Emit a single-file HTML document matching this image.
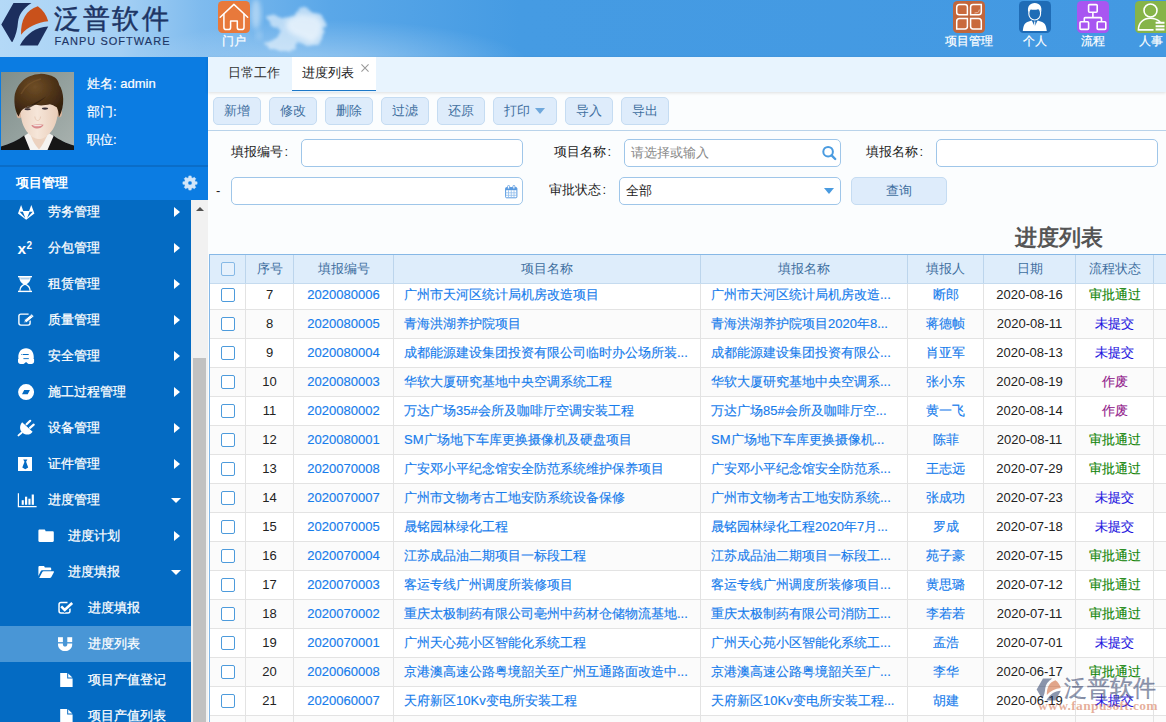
<!DOCTYPE html>
<html lang="zh"><head><meta charset="utf-8"><title>进度列表</title>
<style>
*{box-sizing:border-box;margin:0;padding:0}
html,body{width:1166px;height:722px;overflow:hidden;background:#fbfdfe;font-family:"Liberation Sans",sans-serif;font-size:13px;color:#222}
.abs{position:absolute}
#hdr{position:absolute;left:0;top:0;width:1166px;height:57px;overflow:hidden;
 background:linear-gradient(90deg,#b4d9f7 0px,#a5d0f4 120px,#7fbbee 200px,#5aa7e8 330px,#459be3 520px,#4399e2 1166px)}
#hdr .cloud{position:absolute;border-radius:50%;filter:blur(3px)}
.logotxt{position:absolute;left:54px;top:0.5px;font-size:26.5px;font-weight:500;color:#1d3565;letter-spacing:2.2px;line-height:36px;white-space:nowrap;-webkit-text-stroke:0.45px #1d3565}
.logosub{position:absolute;left:54.5px;top:34.5px;font-size:11px;color:#1d3565;letter-spacing:1.03px;line-height:12px;white-space:nowrap;-webkit-text-stroke:0.15px #1d3565}
.nav{position:absolute;top:1px;width:32px;height:32px;overflow:hidden}
.navl{position:absolute;top:34px;width:80px;text-align:center;color:#fff;font-size:12px;line-height:15px;white-space:nowrap;-webkit-text-stroke:0.2px #fff}
#side{position:absolute;left:0;top:57px;width:208px;height:665px;background:#0b7ce2;overflow:hidden}
#side .u{position:absolute;left:87px;color:#fff;font-size:13px;line-height:16px;white-space:nowrap;-webkit-text-stroke:0.2px #fff}
#sh{position:absolute;left:0;top:108px;width:208px;height:35px;background:#0b7ce2;border-top:2px solid #0a6dc8}
#sh b{position:absolute;left:16px;top:8px;color:#fff;font-size:13px;line-height:16px}
#menu{position:absolute;left:0;top:143px;width:191px;height:522px;background:#046bc3}
.mi{position:absolute;left:0;width:191px;height:36px;color:#fff;font-size:13px;line-height:36px;white-space:nowrap;-webkit-text-stroke:0.25px #fff}
.mi.on{background:#4996d6}
.mi .t{position:absolute;top:0}
.mi svg{position:absolute}
.ar{position:absolute;left:174px;top:13.1px;width:0;height:0;border-left:6.6px solid #fff;border-top:5.3px solid transparent;border-bottom:5.3px solid transparent}
.ad{position:absolute;left:171.3px;top:16.2px;width:0;height:0;border-top:5.8px solid #fff;border-left:5.2px solid transparent;border-right:5.2px solid transparent}
#sb{position:absolute;left:191px;top:143px;width:17px;height:522px;background:#f1f1f1}
#sb .th{position:absolute;left:2px;top:158px;width:13px;height:365px;background:#c1c1c1}
#sb .up{position:absolute;left:4.6px;top:6.8px;width:0;height:0;border-bottom:4.4px solid #505050;border-left:4px solid transparent;border-right:4px solid transparent}
#tabs{position:absolute;left:208px;top:57px;width:958px;height:35px;background:#e8f4fe;box-shadow:0 1px 3px rgba(0,0,0,.12)}
#tabs .t1{position:absolute;left:20px;top:8px;font-size:13px;line-height:16px;color:#333}
#tabs .t2{position:absolute;left:84px;top:0;width:84px;height:34px;background:#fff;border-bottom:1.5px solid #1d78c8}
#tabs .t2 span{position:absolute;left:10px;top:8px;font-size:13px;line-height:16px;color:#222}
#tabs .x{position:absolute;left:153px;top:7px;width:8px;height:8px}
.btn{position:absolute;top:97px;height:28px;width:48px;border:1px solid #c5dcf2;border-radius:5px;background:#deecfb;color:#3f6f9f;font-size:13px;line-height:25px;text-align:center;white-space:nowrap}
#tbline{position:absolute;left:208px;top:130px;width:958px;height:1px;background:#b9d3ea}
.lbl{position:absolute;font-size:13px;line-height:16px;color:#222;white-space:nowrap}
.inp{position:absolute;height:28px;border:1px solid #9fc6e9;border-radius:5px;background:#fff}
#title{position:absolute;left:1014.5px;top:224px;font-size:22px;font-weight:bold;color:#555;line-height:28px;white-space:nowrap}
#grid{position:absolute;left:209px;top:254px;width:957px;height:468px;border-left:1px solid #86b8e6;overflow:hidden;background:#fff}
#gh{position:absolute;left:0;top:0;width:957px;height:30px;background:#deedfb;border-top:1px solid #86b8e6;border-bottom:1px solid #c5dbef;z-index:2}
.h{position:absolute;top:0;height:28px;line-height:27px;text-align:center;color:#3f6f9f;font-size:13px;border-right:1px solid #bcd5ec;white-space:nowrap}
.tr{position:absolute;left:0;width:957px;height:29px;border-bottom:1px solid #e3e3e3;background:#fff}
.tr.alt{background:#fbfbfb}
.c{position:absolute;top:0;height:28px;line-height:27px;text-align:center;border-right:1px solid #e3e3e3;white-space:nowrap;overflow:hidden;font-size:13px;color:#222}
.c0,.h0{left:0;width:36px}
.c1,.h1{left:36px;width:48px}
.c2,.h2{left:84px;width:100px}
.c3,.h3{left:184px;width:307px}
.c4,.h4{left:491px;width:207px}
.c5,.h5{left:698px;width:76px}
.c6,.h6{left:774px;width:92px}
.c7,.h7{left:866px;width:78px}
.c8,.h8{left:944px;width:20px;border-right:0}
.c3,.c4{text-align:left;padding-left:10px}
.lk{color:#167cec;-webkit-text-stroke:0.15px #167cec}
.sg{color:#14860a;-webkit-text-stroke:0.15px #14860a}.sb{color:#2414e0;-webkit-text-stroke:0.15px #2414e0}.sp{color:#92228c;-webkit-text-stroke:0.15px #92228c}
.cb{position:absolute;left:11px;top:7px;width:14px;height:14px;border:1px solid #4d9bdc;border-radius:2px;background:#fff}
#wm{position:absolute;left:1036px;top:677px;width:130px;height:40px;z-index:5}
.wmt{position:absolute;left:27.5px;top:-3px;font-size:22.5px;font-weight:500;-webkit-text-stroke:0.4px rgba(40,55,100,.5);letter-spacing:0.4px;line-height:30px;color:rgba(40,55,100,.5);white-space:nowrap;letter-spacing:0px}
.wmu{position:absolute;left:2px;top:21px;font-family:"Liberation Serif",serif;font-weight:bold;font-size:13.5px;line-height:16px;color:rgba(205,95,55,.5);white-space:nowrap;letter-spacing:0.35px}

</style></head>
<body>
<div id="hdr">
 <div class="abs" style="left:0;top:0;width:700px;height:57px;background:radial-gradient(ellipse 200px 44px at 330px 64px,rgba(255,255,255,.36),rgba(255,255,255,0) 100%)"></div>
 <svg class="abs" style="left:230px;top:0" width="120" height="57" viewBox="230 0 120 57"><defs>
  <filter id="cb" x="-30%" y="-30%" width="160%" height="160%"><feTurbulence type="fractalNoise" baseFrequency="0.09" numOctaves="3" seed="7" result="n"/><feDisplacementMap in="SourceGraphic" in2="n" scale="9" xChannelSelector="R" yChannelSelector="G"/><feGaussianBlur stdDeviation="1.5"/></filter>
  <filter id="cb2" x="-30%" y="-30%" width="160%" height="160%"><feGaussianBlur stdDeviation="2.6"/></filter></defs>
  <g fill="#fff">
  <ellipse cx="256" cy="14" rx="5" ry="15" opacity=".42" filter="url(#cb2)"/>
  <ellipse cx="259" cy="35" rx="3" ry="5" opacity=".2" filter="url(#cb2)"/>
  <path filter="url(#cb)" opacity=".55" d="M266.3,16.7 L272.4,14.5 L281.3,19.5 L288,16.7 L294.7,13.4 L299.2,8.9 L305.9,7.8 L310.3,11.1 L317,13.4 L322.6,15.6 L327.1,21.2 L327.6,26.2 L322.6,27.9 L323.7,33.4 L321.5,39 L317,44.6 L310.3,46.8 L304.8,44.6 L299.2,41.2 L294.7,44.6 L292.5,49 L282.5,50.2 L276.9,49 L268,45.7 L263.5,43.5 L270.2,40.1 L276.9,36.8 L281.3,32.3 L276.9,27.9 L272.4,23.4Z"/>
  <path filter="url(#cb2)" opacity=".55" d="M287,20 L300,14 L317,16 L323,24 L320,36 L312,43 L302,38 L292,34 L286,28Z"/>
  </g></svg>
 <svg class="abs" style="left:0;top:0" width="52" height="50" viewBox="0 0 52 50">
  <path d="M13.5,3.1 L31.5,3.1 C23,8.5 19,14.5 18,22 C17.5,29 16,35 12.5,42 L11.5,41.8 L1.3,24.4Z" fill="#1c2f5e"/>
  <path d="M21.1,34.7 C20.6,20 26,10 37.8,6.2 C43,10 46.5,15 48.2,21.2 C37,22.5 28,26.5 21.1,34.7Z" fill="#c9511b"/>
  <path d="M19.8,45.4 L37.8,45.4 L48.2,26.6 C36,27.5 27,33 19.8,45.4Z" fill="#1c2f5e"/>
 </svg>
 <div class="logotxt">泛普软件</div>
 <div class="logosub">FANPU SOFTWARE</div>
 <svg class="nav" style="left:218px" viewBox="0 0 32 32"><rect width="32" height="32" rx="4.5" fill="#e8793b"/><g fill="none" stroke="#fff" stroke-width="1.5" stroke-linecap="round" stroke-linejoin="round"><path d="M2.2,16.2 L15.9,3.4 L29.7,16.2"/><path d="M5.9,13.2 L5.9,26.2 Q5.9,28.6 8.2,28.6 L10.4,28.6 Q12.6,28.6 12.6,26.4 L12.6,20 L19.3,20 L19.3,26.4 Q19.3,28.6 21.5,28.6 L23.8,28.6 Q26,28.6 26,26.2 L26,13.2"/></g></svg>
 <div class="navl" style="left:194px">门户</div>
 <svg class="nav" style="left:953px" viewBox="0 0 32 32"><rect width="32" height="32" rx="4.5" fill="#c1663c"/><g fill="#c96a3d" stroke="#fff" stroke-width="1.5"><path d="M6.5,3.6 L12,3.6 Q14.4,3.6 14.4,6 L14.4,13.8 L6.2,13.8 Q3.7,13.8 3.7,11.3 L3.7,6.4 Q3.7,3.6 6.5,3.6Z"/><path d="M17.6,6 Q17.6,3.6 20,3.6 L28.3,3.6 L28.3,11 Q28.3,13.8 25.5,13.8 L17.6,13.8Z"/><path d="M6.5,17.6 L14.4,17.6 L14.4,25.6 Q14.4,28 12,28 L3.7,28 L3.7,20.4 Q3.7,17.6 6.5,17.6Z"/><path d="M17.6,17.6 L25.5,17.6 Q28.3,17.6 28.3,20.4 L28.3,28 L20,28 Q17.6,28 17.6,25.6Z"/></g><path d="M21.5,12 L24.5,11.6 Q26.3,11 26.3,8.6" fill="none" stroke="#f3d9cc" stroke-width="0.7"/></svg>
 <div class="navl" style="left:929px">项目管理</div>
 <svg class="nav" style="left:1019px" viewBox="0 0 32 32"><rect width="32" height="32" rx="4.5" fill="#1f6cb6"/><path d="M3.8,30 C4.4,25 5.5,21.8 9,20.8 L12.8,19.6 L15.7,25.6 L18.6,19.6 L22.4,20.8 C26,21.8 27.2,25 27.8,30Z" fill="#fff"/><path d="M15.7,20.5 L15.7,27" stroke="#fff" stroke-width="1.1"/><ellipse cx="15.7" cy="12.4" rx="5.9" ry="6.6" fill="#1f6cb6" stroke="#fff" stroke-width="1.1"/><path d="M9.3,11.5 C8,5.5 11,2 15.7,2 C20.5,2 23.5,5.5 22.1,11.5 C21.5,8.8 20.5,8 19,8.2 C17,9 13,9 11.5,8.2 C10.5,8.4 9.8,9.5 9.3,11.5Z" fill="#fff"/></svg>
 <div class="navl" style="left:995px">个人</div>
 <svg class="nav" style="left:1077px" viewBox="0 0 32 32"><rect width="32" height="32" rx="4.5" fill="#a856f1"/><g fill="none" stroke="#fff" stroke-width="1.6" stroke-linejoin="round"><rect x="11.6" y="3.6" width="8.6" height="7.6" rx="1"/><rect x="3" y="20.8" width="8.6" height="7.6" rx="1"/><rect x="20.2" y="20.8" width="8.6" height="7.6" rx="1"/><path d="M15.9,11.2 L15.9,16.6 M7.3,20.8 L7.3,17.4 Q7.3,16.6 8.1,16.6 L23.7,16.6 Q24.5,16.6 24.5,17.4 L24.5,20.8"/></g></svg>
 <div class="navl" style="left:1053px">流程</div>
 <svg class="nav" style="left:1135px" viewBox="0 0 32 32"><rect width="36" height="32" rx="4.5" fill="#86b449"/><g fill="none" stroke="#fff" stroke-width="1.6" stroke-linecap="round"><circle cx="15.5" cy="9.5" r="6.5"/><path d="M18,28.9 L3.4,28.9 C3.4,22 8,17.2 15.5,17.2 C19.5,17.2 22.5,18.6 24.8,20.6"/></g><path d="M20.6,21.7 L29.5,21.7 M20.6,25.3 L29.5,25.3 M20.6,28.6 L29.5,28.6" stroke="#fff" stroke-width="2"/></svg>
 <div class="navl" style="left:1111px">人事</div>
</div>
<div id="side">
 <svg class="abs" id="avatar" style="left:1px;top:15px" width="73" height="78" viewBox="0 0 73 78">
  <defs>
   <linearGradient id="avbg" x1="0" y1="0" x2="1" y2="1"><stop offset="0" stop-color="#7f8e8b"/><stop offset="0.5" stop-color="#93a09d"/><stop offset="1" stop-color="#a9b2af"/></linearGradient>
   <radialGradient id="hairg" cx="0.42" cy="0.3" r="0.75"><stop offset="0" stop-color="#6f4e26"/><stop offset="0.55" stop-color="#4d3217"/><stop offset="1" stop-color="#2f1d0d"/></radialGradient>
   <linearGradient id="faceg" x1="0" y1="0" x2="1" y2="0"><stop offset="0" stop-color="#ecd3c1"/><stop offset="0.45" stop-color="#f6e6d9"/><stop offset="1" stop-color="#e9cdb9"/></linearGradient>
   <filter id="b1" x="-10%" y="-10%" width="120%" height="120%"><feGaussianBlur stdDeviation="0.55"/></filter>
  </defs>
  <rect width="73" height="78" fill="url(#avbg)"/>
  <g filter="url(#b1)">
   <path d="M0,78 L0,74.5 C8,72 17,68.5 23,63.5 L30,70 L45,70 L52.5,63.5 C58,68 66,71.5 73,73.5 L73,78Z" fill="#131419"/>
   <path d="M23.3,64 L29,60 L46,60 L52.6,64 L46.5,78 L29,78Z" fill="#f5f3f0"/>
   <path d="M30,56 L46,56 L46,64 C43,70 41,74 38,77.5 C35,74 32,70 30,64Z" fill="#ecd2bf"/>
   <ellipse cx="18.2" cy="42" rx="2.6" ry="4.3" fill="#d8b39a"/>
   <ellipse cx="58.3" cy="41" rx="2.6" ry="4.3" fill="#dab59c"/>
   <path d="M19.6,36 C19.6,28 28,25 38,25 C49,25 56.8,28 56.8,36 C57.2,47 54,56.5 48,62 C44,66 41,67 38.6,67 C35.5,67 31.5,65.8 27.5,61.5 C22,55.5 19.2,47 19.6,36Z" fill="url(#faceg)"/>
   <path d="M17.7,44.6 C14.5,40 13,33 13.5,25 C14,17 20,8 28,4.5 C32,2.6 36,1.9 39,1.9 C43,1.6 49,3 53.9,5.4 C56.5,7 57.5,10 58.2,13 C60.5,16 62,21 62.2,27 C62.4,33 61,40 57.8,45.3 C57.8,41 57,37.5 55.7,35.3 C53,33.5 51,32.6 48.9,32.2 C46,32.8 43,33.4 40.1,33.4 C37,33.4 35,32.6 32.7,32.8 C29,33.6 26,34.8 23.9,35.9 C22,37 21,38 20.2,39 C19,41 18.2,42.8 17.7,44.6Z" fill="url(#hairg)"/>
   <path d="M23.5,36.2 C29,33.2 37,30 45,24.5 C39,30 34,33.2 27,36.4Z" fill="#2b1a0b" opacity=".8"/>
   <path d="M20,22 C24,14 31,9 40,7" fill="none" stroke="#7d5a30" stroke-width="1.4" opacity=".55"/>
   <ellipse cx="26.6" cy="37.3" rx="3.2" ry="1.05" fill="#3d3238"/>
   <ellipse cx="44" cy="36.6" rx="3.2" ry="1.05" fill="#3d3238"/>
   <path d="M33.8,44.5 C34.2,47 34.8,48.3 36.6,48.5 C38.4,48.5 39.3,47.2 39.6,44.5" fill="none" stroke="#e3c4b0" stroke-width="0.8"/>
   <path d="M30.3,53.2 C33,52.5 39,52.2 42.7,52.8 C41,55.8 38,56.7 35.6,56.5 C33.2,56.3 31.2,55 30.3,53.2Z" fill="#d98a8c"/>
   <path d="M31.8,53.4 C34,53 38.5,52.8 41.2,53.2 C39.5,54.5 34.2,54.7 31.8,53.4Z" fill="#f3e6e2"/>
  </g>
 </svg>
 <div class="u" style="top:18.6px">姓名: admin</div>
 <div class="u" style="top:46.6px">部门:</div>
 <div class="u" style="top:74.6px">职位:</div>
 <div id="sh"><b>项目管理</b><svg class="abs" style="left:182.2px;top:8.2px" width="16" height="16" viewBox="0 0 16 16"><path fill-rule="evenodd" d="M13.43,6.65 L15.10,6.82 L15.10,9.18 L13.43,9.35 L12.80,10.89 L13.86,12.19 L12.19,13.86 L10.89,12.80 L9.35,13.43 L9.18,15.10 L6.82,15.10 L6.65,13.43 L5.11,12.80 L3.81,13.86 L2.14,12.19 L3.20,10.89 L2.57,9.35 L0.90,9.18 L0.90,6.82 L2.57,6.65 L3.20,5.11 L2.14,3.81 L3.81,2.14 L5.11,3.20 L6.65,2.57 L6.82,0.90 L9.18,0.90 L9.35,2.57 L10.89,3.20 L12.19,2.14 L13.86,3.81 L12.80,5.11Z M5.90,8.00 a2.1,2.1 0 1,0 4.2,0 a2.1,2.1 0 1,0 -4.2,0Z" fill="#d3e6f9" stroke="#d3e6f9" stroke-width="0.5" stroke-linejoin="round"/></svg></div>
 <div id="menu">
  <div class="mi" style="top:-6px"><svg width="80" height="36" viewBox="0 0 80 36" style="left:0;top:0"><path d="M21.1,11 L23.3,17 L29.1,17 L31.3,11 L34.4,19.5 L26.2,25.7 L18,19.5Z" fill="#fff"/><path d="M19.7,17.7 L22.9,17.7 L25.3,24Z M32.7,17.7 L29.5,17.7 L27.1,24Z" fill="#046bc3"/></svg><span class="t" style="left:48px">劳务管理</span><i class="ar"></i></div>
  <div class="mi" style="top:30px"><svg width="80" height="36" viewBox="0 0 80 36" style="left:0;top:0"><text x="17.6" y="23.9" font-family="Liberation Sans, sans-serif" font-weight="bold" font-size="15.5" fill="#fff">x</text><text x="26.6" y="18.5" font-family="Liberation Sans, sans-serif" font-weight="bold" font-size="10" fill="#fff">2</text></svg><span class="t" style="left:48px">分包管理</span><i class="ar"></i></div>
  <div class="mi" style="top:66px"><svg width="80" height="36" viewBox="0 0 80 36" style="left:0;top:0"><rect x="18" y="10" width="14" height="1.4" fill="#fff"/><rect x="18" y="24.7" width="14" height="1.4" fill="#fff"/><path d="M19.3,11.3 L30.7,11.3 C30.7,15 28.6,17 26.4,18.3 L23.6,18.3 C21.4,17 19.3,15 19.3,11.3Z" fill="#fff"/><rect x="20.4" y="12.1" width="9.2" height="1.3" fill="#046bc3" opacity=".35"/><path d="M19.9,24.8 C19.9,21 22,19.2 25,18.1 C28,19.2 30.1,21 30.1,24.8" fill="none" stroke="#fff" stroke-width="1.3"/></svg><span class="t" style="left:48px">租赁管理</span><i class="ar"></i></div>
  <div class="mi" style="top:102px"><svg width="80" height="36" viewBox="0 0 80 36" style="left:0;top:0"><path d="M28.6,12.1 L20.9,12.1 C19.7,12.1 18.9,12.9 18.9,14.1 L18.9,21.1 C18.9,22.3 19.7,23.1 20.9,23.1 L28.1,23.1 C29.3,23.1 30.1,22.3 30.1,21.1 L30.1,18.6" fill="none" stroke="#fff" stroke-width="1.4"/><path d="M23.7,21 L24.5,17.8 L31.8,11.8 L34,14.5 L26.8,20.4Z" fill="#fff" stroke="#046bc3" stroke-width="0.9"/><path d="M24.6,20.2 L24.95,18.9 L25.9,19.9Z" fill="#046bc3"/><path d="M30.6,13.1 L32.6,15.5" stroke="#046bc3" stroke-width="0.5" opacity=".6"/></svg><span class="t" style="left:48px">质量管理</span><i class="ar"></i></div>
  <div class="mi" style="top:138px"><svg width="80" height="36" viewBox="0 0 80 36" style="left:0;top:0"><path d="M18.3,19.6 C18.3,13.8 21,10.2 26.05,10.2 C31.1,10.2 33.8,13.8 33.8,19.6 L33.5,20.4 L34.1,21.2 L34.1,23.6 C34.1,25.2 32.9,26.1 31.6,26.1 L29.6,26.1 C28.1,26.1 27.4,24.9 26.05,24 C24.7,24.9 24,26.1 22.5,26.1 L20.5,26.1 C19.2,26.1 18,25.2 18,23.6 L18,21.2 L18.6,20.4Z" fill="#fff"/><rect x="22.9" y="16" width="5.8" height="1" fill="#046bc3"/><rect x="21.4" y="16" width="0.9" height="1" fill="#046bc3"/><rect x="23.4" y="20.2" width="5.4" height="0.9" fill="#046bc3"/></svg><span class="t" style="left:48px">安全管理</span><i class="ar"></i></div>
  <div class="mi" style="top:174px"><svg width="80" height="36" viewBox="0 0 80 36" style="left:0;top:0"><path fill-rule="evenodd" d="M18.1,18.1 a8,8 0 1,0 16,0 a8,8 0 1,0 -16,0Z M24.2,16.1 L29.9,16.1 L27.7,20.3 L22,20.3Z" fill="#fff"/></svg><span class="t" style="left:48px">施工过程管理</span><i class="ar"></i></div>
  <div class="mi" style="top:210px"><svg width="80" height="36" viewBox="0 0 80 36" style="left:0;top:0"><path d="M26.6,14.3 L30.2,10.8 M30,17.9 L33.7,14.7" stroke="#fff" stroke-width="2.2" stroke-linecap="round" fill="none"/><path d="M21.6,22.7 L18.5,25.4" stroke="#fff" stroke-width="1.9" stroke-linecap="round" fill="none"/><path d="M22.1,12.3 L32.6,21.7 C30.4,25 26,25.3 23,23.2 C19.7,21 19,16 22.1,12.3Z" fill="#fff"/></svg><span class="t" style="left:48px">设备管理</span><i class="ar"></i></div>
  <div class="mi" style="top:246px"><svg width="80" height="36" viewBox="0 0 80 36" style="left:0;top:0"><rect x="18" y="11" width="14" height="14" fill="#fff"/><path d="M23.2,13.4 L27.4,13.4 L26.1,15.7 L28.2,21.4 L25.25,23.3 L22.3,21.4 L24.5,15.7Z" fill="#046bc3"/></svg><span class="t" style="left:48px">证件管理</span><i class="ar"></i></div>
  <div class="mi" style="top:282px"><svg width="80" height="36" viewBox="0 0 80 36" style="left:0;top:0"><path d="M18.4,11.3 L18.4,24.7 L36.6,24.7" fill="none" stroke="#fff" stroke-width="1.2"/><rect x="21.7" y="18.2" width="2.1" height="4.6" fill="#fff"/><rect x="25" y="14.7" width="2.2" height="8.1" fill="#fff"/><rect x="28.4" y="16.7" width="2.1" height="6.1" fill="#fff"/><rect x="31.7" y="12.5" width="2.2" height="10.3" fill="#fff"/></svg><span class="t" style="left:48px">进度管理</span><i class="ad"></i></div>
  <div class="mi" style="top:318px"><svg width="80" height="36" viewBox="0 0 80 36" style="left:0;top:0"><path d="M39.6,11.6 L44.3,11.6 C45,11.6 45.4,12.2 45.6,13.3 L52.6,13.3 C53.3,13.3 53.8,13.8 53.8,14.5 L53.8,22.8 C53.8,23.5 53.3,24 52.6,24 L39.6,24 C38.9,24 38.4,23.5 38.4,22.8 L38.4,12.8 C38.4,12.1 38.9,11.6 39.6,11.6Z" fill="#fff"/></svg><span class="t" style="left:68px">进度计划</span><i class="ar"></i></div>
  <div class="mi" style="top:354px"><svg width="80" height="36" viewBox="0 0 80 36" style="left:0;top:0"><path d="M38.4,22 L38.4,13.2 C38.4,12.5 38.9,12 39.6,12 L43.5,12 C44.2,12 44.6,12.6 44.8,13.4 L50,13.4 C50.7,13.4 51.2,13.9 51.2,14.6 L51.2,16.3 L42.5,16.3 C41.6,16.3 41,16.8 40.6,17.5Z" fill="#fff"/><path d="M39.2,24 L42.2,18.2 C42.5,17.6 43,17.3 43.6,17.3 L53.2,17.3 C53.9,17.3 54.1,17.8 53.8,18.4 L51.2,23.2 C50.9,23.8 50.4,24 49.8,24Z" fill="#fff"/></svg><span class="t" style="left:68px">进度填报</span><i class="ad"></i></div>
  <div class="mi" style="top:390px"><svg width="80" height="36" viewBox="0 0 80 36" style="left:0;top:0"><path d="M67.5,12.45 L61,12.45 C59.8,12.45 59.05,13.2 59.05,14.4 L59.05,21 C59.05,22.2 59.8,22.95 61,22.95 L68,22.95 C69.2,22.95 69.95,22.2 69.95,21 L69.95,18.6" fill="none" stroke="#fff" stroke-width="1.5"/><path d="M61.2,16.4 L64.7,19.9 L72.2,13" fill="none" stroke="#046bc3" stroke-width="4.6"/><path d="M61.2,16.4 L64.7,19.9 L72.2,13" fill="none" stroke="#fff" stroke-width="2.6"/></svg><span class="t" style="left:88px">进度填报</span></div>
  <div class="mi on" style="top:426px"><svg width="80" height="36" viewBox="0 0 80 36" style="left:0;top:0"><rect x="58" y="11.2" width="4.9" height="4.9" fill="#fff"/><rect x="67.3" y="11.2" width="4.9" height="4.9" fill="#fff"/><path d="M58,17.6 L62.9,17.6 L62.9,18.5 C62.9,19.8 63.8,20.6 65.1,20.6 C66.4,20.6 67.3,19.8 67.3,18.5 L67.3,17.6 L72.2,17.6 L72.2,18.5 C72.2,22.5 69,25.1 65.1,25.1 C61.2,25.1 58,22.5 58,18.5Z" fill="#fff"/></svg><span class="t" style="left:88px">进度列表</span></div>
  <div class="mi" style="top:462px"><svg width="80" height="36" viewBox="0 0 80 36" style="left:0;top:0"><path d="M60.2,11.1 L67.2,11.1 L67.2,16.5 L72.6,16.5 L72.6,25 L60.2,25Z" fill="#fff"/><path d="M68.2,11.4 L72.4,15.6 L68.2,15.6Z" fill="#fff"/></svg><span class="t" style="left:88px">项目产值登记</span></div>
  <div class="mi" style="top:498px"><svg width="80" height="36" viewBox="0 0 80 36" style="left:0;top:0"><path d="M60.2,11.1 L67.2,11.1 L67.2,16.5 L72.6,16.5 L72.6,25 L60.2,25Z" fill="#fff"/><path d="M68.2,11.4 L72.4,15.6 L68.2,15.6Z" fill="#fff"/></svg><span class="t" style="left:88px">项目产值列表</span></div>
 </div>
 <div id="sb"><i class="up"></i><i class="th"></i></div>
</div>
<div id="tabs">
 <div class="t1">日常工作</div>
 <div class="t2"><span>进度列表</span></div>
 <svg class="x" viewBox="0 0 9 9"><path d="M0.5,0.5 L8.5,8.5 M8.5,0.5 L0.5,8.5" stroke="#999" stroke-width="1.2" fill="none"/></svg>
</div>
<div class="btn" style="left:213px">新增</div>
<div class="btn" style="left:269px">修改</div>
<div class="btn" style="left:325px">删除</div>
<div class="btn" style="left:381px">过滤</div>
<div class="btn" style="left:437px">还原</div>
<div class="btn" style="left:493px;width:64px;text-align:left;padding-left:10px">打印<i class="abs" style="left:41px;top:10px;width:0;height:0;border-top:6px solid #6fa8dc;border-left:5px solid transparent;border-right:5px solid transparent"></i></div>
<div class="btn" style="left:565px">导入</div>
<div class="btn" style="left:621px">导出</div>
<div id="tbline"></div>
<div class="lbl" style="left:231px;top:144px">填报编号<span style="margin-left:1.6px">:</span></div>
<div class="inp" style="left:301px;top:139px;width:222px"></div>
<div class="lbl" style="left:554px;top:144px">项目名称<span style="margin-left:1.6px">:</span></div>
<div class="inp" style="left:624px;top:139px;width:217px"><span class="abs" style="left:6px;top:5px;color:#888;font-size:13px;line-height:16px">请选择或输入</span><svg class="abs" style="left:196px;top:5px" width="16" height="16" viewBox="0 0 16 16"><circle cx="7.1" cy="6.7" r="4.8" fill="none" stroke="#4a9be0" stroke-width="2"/><path d="M10.6,10.4 L14.2,14" stroke="#4a9be0" stroke-width="2.4" stroke-linecap="round"/></svg></div>
<div class="lbl" style="left:866px;top:144px">填报名称<span style="margin-left:1.6px">:</span></div>
<div class="inp" style="left:936px;top:139px;width:222px"></div>
<div class="lbl" style="left:216px;top:183px">-</div>
<div class="inp" style="left:231px;top:177px;width:292px"><svg class="abs" style="left:273px;top:7px" width="13" height="14" viewBox="0 0 13 14"><rect x="0.6" y="2.6" width="11.3" height="10.2" rx="1" fill="#fff" stroke="#5a9be0" stroke-width="1"/><rect x="0.6" y="2.6" width="11.3" height="2.6" fill="#5a9be0"/><path d="M0.6,7.8 H11.9 M0.6,10.3 H11.9 M3.5,5.2 V12.8 M6.25,5.2 V12.8 M9,5.2 V12.8" stroke="#8fbcec" stroke-width="0.8" fill="none"/><rect x="2.6" y="0.4" width="2" height="3.6" rx="1" fill="#fff" stroke="#5a9be0" stroke-width="0.8"/><rect x="7.9" y="0.4" width="2" height="3.6" rx="1" fill="#fff" stroke="#5a9be0" stroke-width="0.8"/></svg></div>
<div class="lbl" style="left:549px;top:182px">审批状态<span style="margin-left:1.6px">:</span></div>
<div class="inp" style="left:619px;top:177px;width:222px"><span class="abs" style="left:6px;top:5px;color:#222;font-size:13px;line-height:16px">全部</span><i class="abs" style="left:203.8px;top:9.8px;width:0;height:0;border-top:6.6px solid #4a9be0;border-left:5.3px solid transparent;border-right:5.3px solid transparent"></i></div>
<div class="btn" style="left:851px;top:177px;width:96px">查询</div>
<div id="title">进度列表</div>
<div id="grid">
 <div id="gh">
  <span class="h h0"><i class="cb" style="top:7px;background:#e6f1fc;border-color:#86b9e6"></i></span><span class="h h1">序号</span><span class="h h2">填报编号</span><span class="h h3">项目名称</span><span class="h h4">填报名称</span><span class="h h5">填报人</span><span class="h h6">日期</span><span class="h h7">流程状态</span><span class="h h8"></span>
 </div>
 <div style="position:absolute;left:0;top:-254px;width:957px;height:722px">
<div class="tr" style="top:281px"><span class="c c0"><i class="cb"></i></span><span class="c c1">7</span><span class="c c2 lk">2020080006</span><span class="c c3 lk">广州市天河区统计局机房改造项目</span><span class="c c4 lk">广州市天河区统计局机房改造...</span><span class="c c5 lk">断郎</span><span class="c c6">2020-08-16</span><span class="c c7 sg">审批通过</span><span class="c c8"></span></div>
<div class="tr alt" style="top:310px"><span class="c c0"><i class="cb"></i></span><span class="c c1">8</span><span class="c c2 lk">2020080005</span><span class="c c3 lk">青海洪湖养护院项目</span><span class="c c4 lk">青海洪湖养护院项目2020年8...</span><span class="c c5 lk">蒋德帧</span><span class="c c6">2020-08-11</span><span class="c c7 sb">未提交</span><span class="c c8"></span></div>
<div class="tr" style="top:339px"><span class="c c0"><i class="cb"></i></span><span class="c c1">9</span><span class="c c2 lk">2020080004</span><span class="c c3 lk">成都能源建设集团投资有限公司临时办公场所装...</span><span class="c c4 lk">成都能源建设集团投资有限公...</span><span class="c c5 lk">肖亚军</span><span class="c c6">2020-08-13</span><span class="c c7 sb">未提交</span><span class="c c8"></span></div>
<div class="tr alt" style="top:368px"><span class="c c0"><i class="cb"></i></span><span class="c c1">10</span><span class="c c2 lk">2020080003</span><span class="c c3 lk">华软大厦研究基地中央空调系统工程</span><span class="c c4 lk">华软大厦研究基地中央空调系...</span><span class="c c5 lk">张小东</span><span class="c c6">2020-08-19</span><span class="c c7 sp">作废</span><span class="c c8"></span></div>
<div class="tr" style="top:397px"><span class="c c0"><i class="cb"></i></span><span class="c c1">11</span><span class="c c2 lk">2020080002</span><span class="c c3 lk">万达广场35#会所及咖啡厅空调安装工程</span><span class="c c4 lk">万达广场85#会所及咖啡厅空...</span><span class="c c5 lk">黄一飞</span><span class="c c6">2020-08-14</span><span class="c c7 sp">作废</span><span class="c c8"></span></div>
<div class="tr alt" style="top:426px"><span class="c c0"><i class="cb"></i></span><span class="c c1">12</span><span class="c c2 lk">2020080001</span><span class="c c3 lk">SM广场地下车库更换摄像机及硬盘项目</span><span class="c c4 lk">SM广场地下车库更换摄像机...</span><span class="c c5 lk">陈菲</span><span class="c c6">2020-08-11</span><span class="c c7 sg">审批通过</span><span class="c c8"></span></div>
<div class="tr" style="top:455px"><span class="c c0"><i class="cb"></i></span><span class="c c1">13</span><span class="c c2 lk">2020070008</span><span class="c c3 lk">广安邓小平纪念馆安全防范系统维护保养项目</span><span class="c c4 lk">广安邓小平纪念馆安全防范系...</span><span class="c c5 lk">王志远</span><span class="c c6">2020-07-29</span><span class="c c7 sg">审批通过</span><span class="c c8"></span></div>
<div class="tr alt" style="top:484px"><span class="c c0"><i class="cb"></i></span><span class="c c1">14</span><span class="c c2 lk">2020070007</span><span class="c c3 lk">广州市文物考古工地安防系统设备保修</span><span class="c c4 lk">广州市文物考古工地安防系统...</span><span class="c c5 lk">张成功</span><span class="c c6">2020-07-23</span><span class="c c7 sb">未提交</span><span class="c c8"></span></div>
<div class="tr" style="top:513px"><span class="c c0"><i class="cb"></i></span><span class="c c1">15</span><span class="c c2 lk">2020070005</span><span class="c c3 lk">晟铭园林绿化工程</span><span class="c c4 lk">晟铭园林绿化工程2020年7月...</span><span class="c c5 lk">罗成</span><span class="c c6">2020-07-18</span><span class="c c7 sb">未提交</span><span class="c c8"></span></div>
<div class="tr alt" style="top:542px"><span class="c c0"><i class="cb"></i></span><span class="c c1">16</span><span class="c c2 lk">2020070004</span><span class="c c3 lk">江苏成品油二期项目一标段工程</span><span class="c c4 lk">江苏成品油二期项目一标段工...</span><span class="c c5 lk">苑子豪</span><span class="c c6">2020-07-15</span><span class="c c7 sg">审批通过</span><span class="c c8"></span></div>
<div class="tr" style="top:571px"><span class="c c0"><i class="cb"></i></span><span class="c c1">17</span><span class="c c2 lk">2020070003</span><span class="c c3 lk">客运专线广州调度所装修项目</span><span class="c c4 lk">客运专线广州调度所装修项目...</span><span class="c c5 lk">黄思璐</span><span class="c c6">2020-07-12</span><span class="c c7 sg">审批通过</span><span class="c c8"></span></div>
<div class="tr alt" style="top:600px"><span class="c c0"><i class="cb"></i></span><span class="c c1">18</span><span class="c c2 lk">2020070002</span><span class="c c3 lk">重庆太极制药有限公司亳州中药材仓储物流基地...</span><span class="c c4 lk">重庆太极制药有限公司消防工...</span><span class="c c5 lk">李若若</span><span class="c c6">2020-07-11</span><span class="c c7 sg">审批通过</span><span class="c c8"></span></div>
<div class="tr" style="top:629px"><span class="c c0"><i class="cb"></i></span><span class="c c1">19</span><span class="c c2 lk">2020070001</span><span class="c c3 lk">广州天心苑小区智能化系统工程</span><span class="c c4 lk">广州天心苑小区智能化系统工...</span><span class="c c5 lk">孟浩</span><span class="c c6">2020-07-01</span><span class="c c7 sb">未提交</span><span class="c c8"></span></div>
<div class="tr alt" style="top:658px"><span class="c c0"><i class="cb"></i></span><span class="c c1">20</span><span class="c c2 lk">2020060008</span><span class="c c3 lk">京港澳高速公路粤境韶关至广州互通路面改造中...</span><span class="c c4 lk">京港澳高速公路粤境韶关至广...</span><span class="c c5 lk">李华</span><span class="c c6">2020-06-17</span><span class="c c7 sg">审批通过</span><span class="c c8"></span></div>
<div class="tr" style="top:687px"><span class="c c0"><i class="cb"></i></span><span class="c c1">21</span><span class="c c2 lk">2020060007</span><span class="c c3 lk">天府新区10Kv变电所安装工程</span><span class="c c4 lk">天府新区10Kv变电所安装工程...</span><span class="c c5 lk">胡建</span><span class="c c6">2020-06-19</span><span class="c c7 sb">未提交</span><span class="c c8"></span></div>
<div class="tr alt" style="top:716px"><span class="c c0"><i class="cb"></i></span><span class="c c1">22</span><span class="c c2 lk">2020060006</span><span class="c c3 lk"></span><span class="c c4 lk"></span><span class="c c5 lk"></span><span class="c c6"></span><span class="c c7 sb"></span><span class="c c8"></span></div>
 </div>
</div>
<div id="wm">
 <svg class="abs" style="left:-0.4px;top:-0.4px" width="26.8" height="25.8" viewBox="0 0 52 50" opacity=".5">
  <path d="M13.5,3.1 L31.5,3.1 C23,8.5 19,14.5 18,22 C17.5,29 16,35 12.5,42 L11.5,41.8 L1.3,24.4Z" fill="#1c2f5e"/>
  <path d="M21.1,34.7 C20.6,20 26,10 37.8,6.2 C43,10 46.5,15 48.2,21.2 C37,22.5 28,26.5 21.1,34.7Z" fill="#c9511b"/>
  <path d="M19.8,45.4 L37.8,45.4 L48.2,26.6 C36,27.5 27,33 19.8,45.4Z" fill="#1c2f5e"/>
 </svg>
 <div class="wmt">泛普软件</div>
 <div class="wmu">www.fanpusoft.com</div>
</div>

</body></html>
